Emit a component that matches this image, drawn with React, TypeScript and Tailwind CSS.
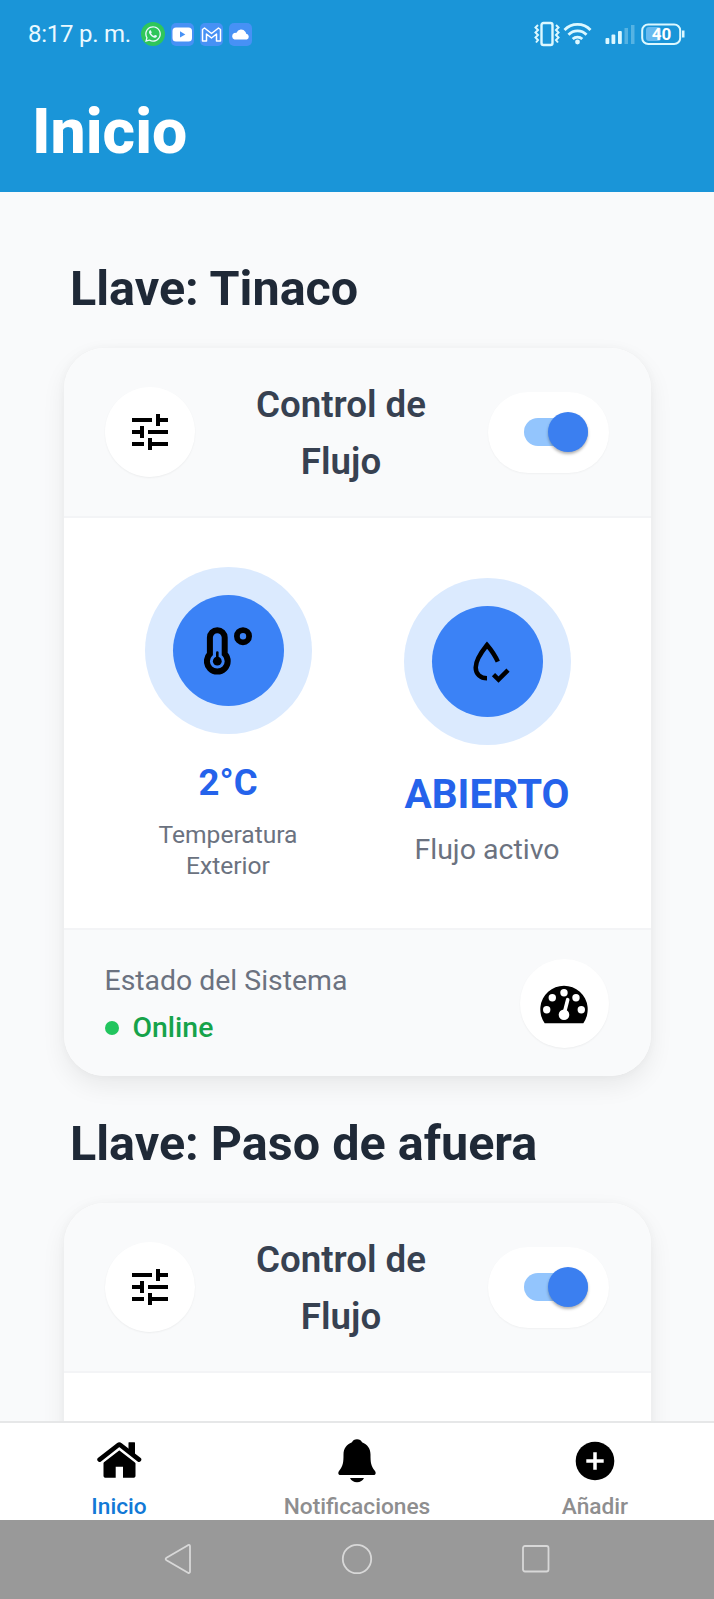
import type { ReactNode } from "react";
import { MdTune } from "react-icons/md";
import { FaWhatsapp } from "react-icons/fa";

function StatusBar() {
  return (
    <div className="flex h-[68px] items-center justify-between pl-7 pr-[28px] text-[#eaf9ff]">
      <div className="flex items-center">
        <span className="w-[113px] whitespace-nowrap text-[24px] leading-[28px] tracking-[-0.25px]">8:17 p. m.</span>
        <div className="flex items-center gap-[6px]">
          <div className="flex size-6 items-center justify-center rounded-full bg-[#2fc65a]">
            <FaWhatsapp size={18} />
          </div>
          <svg width="23" height="23" viewBox="0 0 23 23">
            <rect width="23" height="23" rx="5" fill="#4791f5" />
            <rect x="1.500" y="4.500" width="19.500" height="14" rx="3.500" fill="#fff" />
            <path d="M9 8.300v6.200l5.300-3.100z" fill="#4791f5" />
          </svg>
          <svg width="23" height="23" viewBox="0 0 23 23">
            <rect width="23" height="23" rx="5" fill="#4791f5" />
            <path d="M2.500 18V6.500l2-1.500 7 5.500L18.500 5l2 1.500V18h-4v-7l-5 4-5-4v7z" fill="none" stroke="#fff" strokeWidth="1.500" strokeLinejoin="round" />
          </svg>
          <svg width="23" height="23" viewBox="0 0 23 23">
            <rect width="23" height="23" rx="5" fill="#4791f5" />
            <path d="M5.500 16.500a3.500 3.500 0 0 1-.5-6.400q1.500-.4 2.500-.4a5 5 0 0 1 8.800-.9q.8 1 .9 2a3 3 0 0 1 .8 5.700z" fill="#fff" />
          </svg>
        </div>
      </div>
      <svg width="152" height="26" viewBox="0 0 152 26" fill="none" stroke="#dcf8ff" strokeWidth="2">
        <rect x="7.500" y="2" width="11" height="22" rx="2" strokeWidth="2.400" />
        <path d="M4 4 1.500 6.500 4 9l-2.500 2.500L4 14l-2.500 2.500L4 19l-2 2.500M22 4l2.500 2.500L22 9l2.500 2.500L22 14l2.500 2.500L22 19l2 2.500" strokeWidth="2" />
        <path d="M30.500 9a18 18 0 0 1 26 0M34.500 13.700a12.500 12.500 0 0 1 18 0M38.700 18a7 7 0 0 1 9.600 0" strokeWidth="2.800" />
        <circle cx="43.500" cy="21" r="2.400" fill="#dcf8ff" stroke="none" />
        <g fill="#dcf8ff" stroke="none">
          <rect x="71.500" y="17" width="3.800" height="6" rx="1" />
          <rect x="77.500" y="13.500" width="3.800" height="9.500" rx="1" />
          <rect x="84" y="10" width="3.800" height="13" rx="1" />
          <g opacity=".3">
            <rect x="90.500" y="7" width="3.500" height="16" />
            <rect x="97" y="4" width="3.500" height="19" />
          </g>
        </g>
        <rect x="112" y="6" width="15" height="14" rx="3" fill="#68baf0" stroke="none" />
        <rect x="108.200" y="3.500" width="38" height="19.500" rx="6" />
        <rect x="148" y="9.500" width="2.500" height="7" fill="#dcf8ff" stroke="none" />
        <text x="127.500" y="19.300" textAnchor="middle" fontSize="17" fontWeight="700" fill="#fff" stroke="none">40</text>
      </svg>
    </div>
  );
}

function ThermometerIcon() {
  return (
    <svg width="48" height="48" viewBox="0 0 48 48" fill="none" stroke="#000">
      <path d="M5.900 26.900V10.600a7.400 7.400 0 0 1 14.800 0v16.300a10.400 10.400 0 1 1-14.800 0z" strokeWidth="6" />
      <path d="M13.300 25.500v8" strokeWidth="2.600" strokeLinecap="round" />
      <circle cx="13.300" cy="34.200" r="4.400" fill="#000" stroke="none" />
      <circle cx="39" cy="9.200" r="6.100" strokeWidth="5.800" />
    </svg>
  );
}

function WaterCheckIcon() {
  return (
    <svg width="48" height="48" viewBox="0 0 48 48" fill="none" stroke="#000" strokeWidth="4.500">
      <path d="M34.800 23.700C32.500 18.400 28.500 12.300 24 7c-7 8.800-11.300 16-11.300 22.400C12.700 36 17.500 40.200 24 40.200" />
      <path d="m30.500 36.600 5 5 9.500-9.500" />
    </svg>
  );
}

function GaugeIcon() {
  return (
    <svg width="48" height="48" viewBox="0 0 48 48">
      <path d="M4.700 44.200a23.700 23.700 0 1 1 38.600 0z" fill="#000" />
      <g fill="#fff">
        <circle cx="6.700" cy="30.800" r="3.700" />
        <circle cx="12.300" cy="18.800" r="3.700" />
        <circle cx="24" cy="13.800" r="3.700" />
        <circle cx="36" cy="18.800" r="3.700" />
        <circle cx="41.300" cy="30.800" r="3.700" />
        <circle cx="24" cy="35.800" r="5.300" />
      </g>
      <path d="m24.300 34 3.400-13.300" stroke="#fff" strokeWidth="3.600" strokeLinecap="round" />
    </svg>
  );
}

function HomeIcon() {
  return (
    <svg width="46" height="46" viewBox="0 0 46 46">
      <path d="M7.500 23.500 23.300 11.500l16.200 12V38a1.700 1.700 0 0 1-1.700 1.700H27v-11h-7.300v11H9.200A1.700 1.700 0 0 1 7.500 38z" fill="#000" />
      <path d="M32.500 4.800q0-.5.500-.5h5.500q.5 0 .5.500v14l-6.500-5z" fill="#000" />
      <path d="M3.600 21.600 22.300 7a1.600 1.600 0 0 1 2 0l18.700 14.600" fill="none" stroke="#000" strokeWidth="4.600" strokeLinecap="round" />
      <path d="M5.500 25.100 23.300 11.300l17.800 13.800" fill="none" stroke="#fff" strokeWidth="1.700" />
    </svg>
  );
}

function BellIcon() {
  return (
    <svg width="46" height="46" viewBox="0 0 46 46" fill="#000">
      <path d="M23 1.200c-2.500 0-4.200 1.200-5 3.100C12.500 6.400 9.600 10.600 9.500 16.500c0 8-.4 11.500-4.300 16.200-1.500 2-1 4.300 1.300 4.300h33c2.300 0 2.800-2.300 1.300-4.300-3.900-4.700-4.300-8.200-4.300-16.200C36.400 10.600 33.500 6.400 28 4.300c-.8-1.900-2.500-3.100-5-3.100z" />
      <path d="M16 40h14c-1 2.700-3.800 4.200-7 4.200S17 42.700 16 40z" />
    </svg>
  );
}

function AddIcon() {
  return (
    <svg width="46" height="46" viewBox="0 0 46 46">
      <circle cx="23" cy="23" r="19.300" fill="#000" />
      <path d="M14.300 23h17.400M23 14.300v17.400" stroke="#fff" strokeWidth="3.500" />
    </svg>
  );
}

function Toggle() {
  return (
    <div className="flex h-[81px] w-[121px] items-center rounded-full bg-white pl-[36px] shadow-[0_1px_2px_rgba(0,0,0,0.04)]">
      <div className="flex h-7 w-[64px] items-center justify-end rounded-full bg-[#93c5fd]">
        <div className="size-10 shrink-0 rounded-full bg-[#3b7ff0] shadow-[0_2px_3px_rgba(0,0,0,0.3)]" />
      </div>
    </div>
  );
}

function Bubble({ children }: { children: ReactNode }) {
  return (
    <div className="flex size-[167px] items-center justify-center rounded-full bg-[#dbeafe]">
      <div className="flex size-[111px] items-center justify-center rounded-full bg-[#3b82f6]">{children}</div>
    </div>
  );
}

function ValveCard({ name, children }: { name: string; children?: ReactNode }) {
  return (
    <section className="h-[855px] shrink-0">
      <h2 className="h-[96px] pl-[70px] pt-px text-[48.500px] font-bold leading-[72px] text-[#1f2937]">{name}</h2>
      <div className="mx-auto flex h-[728px] w-[587px] flex-col overflow-hidden rounded-[41px] bg-white shadow-[0_10px_24px_rgba(0,0,0,0.07),0_0_10px_rgba(0,0,0,0.03)]">
        <div className="flex h-[170px] items-center justify-between border-b-2 border-[#f3f4f6] bg-[#f9fafb] pl-[41px] pr-[42px]">
          <div className="flex size-[90px] items-center justify-center rounded-full bg-white shadow-[0_1px_2px_rgba(0,0,0,0.05)]">
            <MdTune size={48} color="#000" />
          </div>
          <h3 className="w-[200px] pt-px text-center text-[36.700px] font-semibold leading-[57px] text-[#374151]">Control de Flujo</h3>
          <Toggle />
        </div>
        {children}
      </div>
    </section>
  );
}

function ValveReadings() {
  return (
    <>
      <div className="flex grow items-start">
        <div className="flex w-[329px] flex-col items-center pt-[49px]">
          <Bubble><ThermometerIcon /></Bubble>
          <p className="mt-[27px] text-[36.500px] font-bold leading-[44px] text-[#2563eb]">2°C</p>
          <p className="mt-[14px] w-[160px] text-center text-[24.600px] leading-[31px] text-[#6b7280]">Temperatura Exterior</p>
        </div>
        <div className="flex w-[189px] flex-col items-center pt-[60px]">
          <Bubble><WaterCheckIcon /></Bubble>
          <p className="mt-[25px] text-[40.500px] font-bold leading-[48px] text-[#2563eb]">ABIERTO</p>
          <p className="mt-[12px] text-[28.500px] leading-[40px] text-[#6b7280]">Flujo activo</p>
        </div>
      </div>
      <div className="flex h-[148px] items-center justify-between border-t-2 border-[#f3f4f6] bg-[#f9fafb] pl-[41px] pr-[42px]">
        <div className="pt-[2px]">
          <p className="text-[28.400px] leading-[40px] text-[#6b7280]">Estado del Sistema</p>
          <div className="mt-[7px] flex items-center gap-[14px]">
            <span className="size-[14px] rounded-full bg-[#22c55e]" />
            <span className="text-[28.400px] font-medium leading-[40px] text-[#16a34a]">Online</span>
          </div>
        </div>
        <div className="flex size-[89px] items-center justify-center rounded-full bg-white shadow-[0_1px_2px_rgba(0,0,0,0.05)]">
          <GaugeIcon />
        </div>
      </div>
    </>
  );
}

function Tab({ icon, label, active = false }: { icon: ReactNode; label: string; active?: boolean }) {
  return (
    <div className={active ? "flex flex-1 flex-col items-center pt-[15px] text-[#1279d6]" : "flex flex-1 flex-col items-center pt-[15px] text-[#8e8e8f]"}>
      {icon}
      <span className="mt-[10px] text-[22.700px] font-medium leading-[26px]">{label}</span>
    </div>
  );
}

export default function App() {
  return (
    <div className="flex h-[1599px] w-[714px] flex-col overflow-hidden bg-[#f9fafb] font-['Roboto',sans-serif]">
      <header className="h-[192px] shrink-0 bg-[#1a95d8]">
        <StatusBar />
        <h1 className="pl-[32px] pt-[27px] text-[62.500px] font-extrabold leading-[74px] text-white">Inicio</h1>
      </header>
      <main className="flex h-[1229px] shrink-0 flex-col overflow-hidden pt-[60px]">
        <ValveCard name="Llave: Tinaco">
          <ValveReadings />
        </ValveCard>
        <ValveCard name="Llave: Paso de afuera" />
      </main>
      <nav className="flex h-[99px] shrink-0 border-t-2 border-[#e6e7e8] bg-white">
        <Tab icon={<HomeIcon />} label="Inicio" active />
        <Tab icon={<BellIcon />} label="Notificaciones" />
        <Tab icon={<AddIcon />} label="Añadir" />
      </nav>
      <footer className="flex h-[79px] shrink-0 items-center justify-center gap-[147px] bg-[#999999] pb-px">
        <svg width="32" height="32" viewBox="0 0 32 32" fill="none" stroke="#d8d8d8" strokeWidth="1.800" strokeLinejoin="round">
          <path d="M4.500 14.800 26 2.200q2-.8 2 1.300v25q0 2-2 1.300L4.500 17.200q-1.700-1.200 0-2.400z" />
        </svg>
        <svg width="32" height="32" viewBox="0 0 32 32" fill="none" stroke="#d8d8d8" strokeWidth="1.800">
          <circle cx="16" cy="16" r="14.200" />
        </svg>
        <svg width="32" height="32" viewBox="0 0 32 32" fill="none" stroke="#d8d8d8" strokeWidth="1.800">
          <rect x="3" y="3" width="25.500" height="25.500" rx="2" />
        </svg>
      </footer>
    </div>
  );
}
